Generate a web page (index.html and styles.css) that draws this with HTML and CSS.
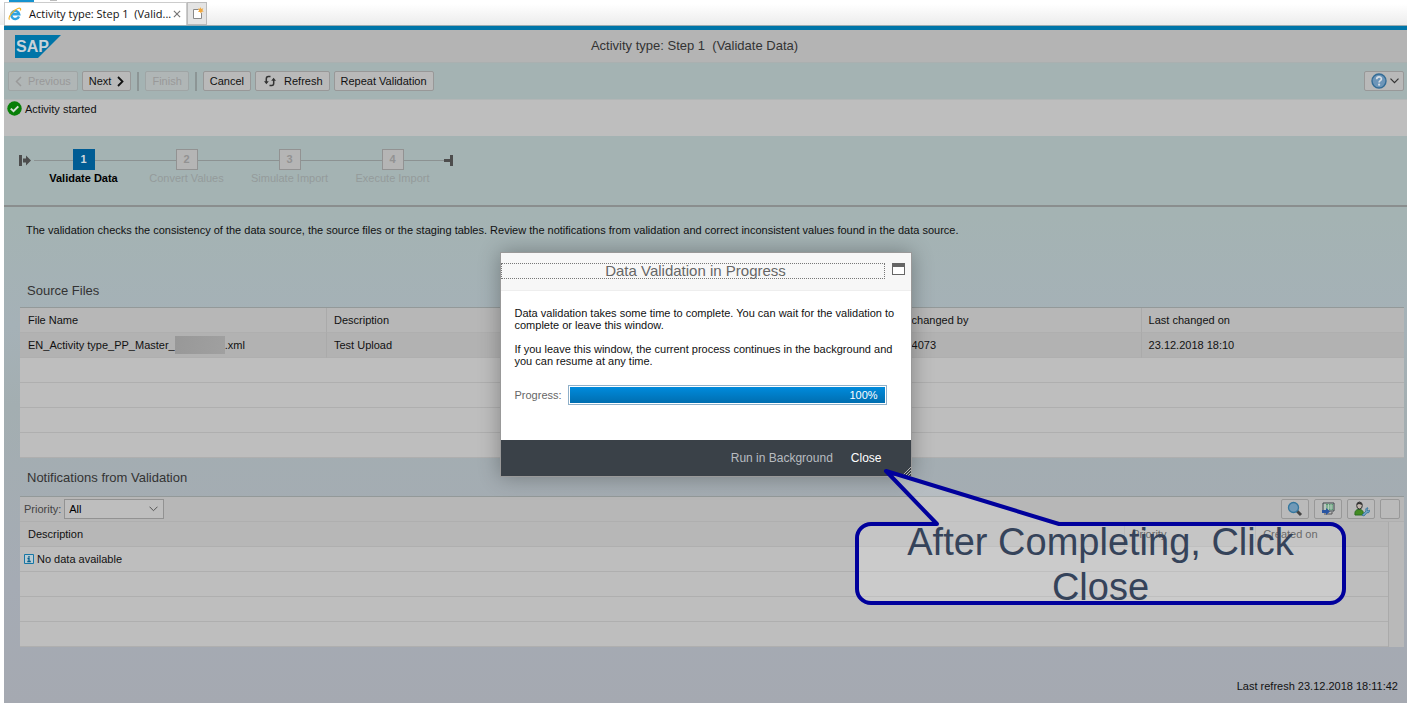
FILE: index.html
```html
<!DOCTYPE html>
<html lang="en">
<head>
<meta charset="utf-8">
<title>Activity type: Step 1 (Validate Data)</title>
<link rel="stylesheet" href="styles.css">
</head>
<body>
<div class="tabstrip">
  <div class="peek"><span class="peek-blue"></span><span class="peek-grey"></span></div>
  <div class="tab">
    <svg class="ie" width="14" height="14" viewBox="0 0 14 14" aria-hidden="true"><path d="M11 9.500A4 4 0 1 1 11.200 7.200H4" fill="none" stroke="#2fa3e0" stroke-width="2.400"/><path d="M1.500 12.600C-.4 10.400 5 3.200 9.800 1.500c2.500-.9 3.300.2 2.500 2" fill="none" stroke="#f2b52e" stroke-width="1.200"/></svg>
    <span class="tab-title">Activity type: Step 1&nbsp; (Valid...</span>
    <button class="tab-close" aria-label="Close tab"><svg width="8" height="8" viewBox="0 0 9 9"><path d="M1 1l7 7M8 1L1 8" stroke="#777" stroke-width="1.300"/></svg></button>
  </div>
  <button class="tab-new" aria-label="New tab"><svg width="13" height="13" viewBox="0 0 13 13"><path d="M7.500 2.500h-5v9h8V6" fill="#fff" stroke="#8a8a8a"/><path d="M9.500 0l.8 1.900 2-.6-.9 1.900 1.400 1.400-2 .2-.8 1.800-1-1.700-2 .1 1.100-1.600L7 1.500l2 .3z" fill="#f0a63a"/></svg></button>
</div>
<div class="app">
  <header class="masthead">
    <svg class="logo" width="46" height="23" viewBox="0 0 46 23" role="img" aria-label="SAP"><path d="M0 0h46L23 23H0z" fill="#0075a8"/><text class="logo-text" x="1" y="17">SAP</text></svg>
    <h1 class="title">Activity type: Step 1&nbsp; (Validate Data)</h1>
  </header>
  <div class="toolbar">
    <button class="btn" disabled><svg width="7" height="11" viewBox="0 0 7 11"><path d="M6 1L1.500 5.500 6 10" fill="none" stroke="currentColor" stroke-width="1.500"/></svg>Previous</button>
    <button class="btn">Next<svg width="7" height="11" viewBox="0 0 7 11"><path d="M1 1l4.500 4.500L1 10" fill="none" stroke="currentColor" stroke-width="1.800"/></svg></button>
    <span class="sep"></span>
    <button class="btn" disabled>Finish</button>
    <span class="sep"></span>
    <button class="btn">Cancel</button>
    <button class="btn btn-wide"><svg width="12" height="12" viewBox="0 0 12 12"><path d="M6.500 1.500H4.300Q2.300 1.500 2.300 3.800V7M5.500 10.500h2.200q2 0 2-2.300V5" fill="none" stroke="#333" stroke-width="1.500"/><path d="M0 6.200h4.800L2.400 9.200zM12 5.800H7.200L9.600 2.800z" fill="#333"/></svg>Refresh</button>
    <button class="btn">Repeat Validation</button>
    <button class="btn help" aria-label="Help"><svg width="16" height="16" viewBox="0 0 16 16"><circle cx="8" cy="8" r="7" fill="#6d95b8" stroke="#336c96" stroke-width="1.400"/><path d="M5.700 6.300c0-3.200 4.700-3 4.700-.4 0 1.700-2.300 1.700-2.300 3.500" fill="none" stroke="#d5dde5" stroke-width="1.700"/><circle cx="8.100" cy="11.700" r="1.100" fill="#d5dde5"/></svg><svg width="9" height="6" viewBox="0 0 9 6"><path d="M.5.7l4 4 4-4" fill="none" stroke="#333" stroke-width="1.200"/></svg></button>
  </div>
  <div class="message" role="status">
    <svg width="15" height="15" viewBox="0 0 15 15" aria-hidden="true"><circle cx="7.500" cy="7.500" r="7.200" fill="#087f08"/><path d="M3.800 7.600l2.700 2.600 4.800-4.800" fill="none" stroke="#d6ded6" stroke-width="2"/></svg>
    <span>Activity started</span>
  </div>
  <nav class="roadmap" aria-label="Steps">
    <svg width="13" height="11" viewBox="0 0 13 11"><path d="M0 0h3v11H0zM4 3.500h3V.5l5 5-5 5v-3H4z" fill="#4d4d4d"/></svg>
    <ol class="steps">
      <li class="step current"><span class="num">1</span><span>Validate Data</span></li>
      <li class="step"><span class="num">2</span><span>Convert Values</span></li>
      <li class="step"><span class="num">3</span><span>Simulate Import</span></li>
      <li class="step"><span class="num">4</span><span>Execute Import</span></li>
    </ol>
    <svg width="10" height="11" viewBox="0 0 10 11"><path d="M0 4h6V0h3v11H6V7H0z" fill="#4d4d4d"/></svg>
  </nav>
  <main class="content">
    <p class="intro">The validation checks the consistency of the data source, the source files or the staging tables. Review the notifications from validation and correct inconsistent values found in the data source.</p>
    <h2 class="heading">Source Files</h2>
    <table class="grid files">
      <colgroup><col class="c-file"><col class="c-desc"><col class="c-by"><col></colgroup>
      <thead><tr><th>File Name</th><th>Description</th><th class="user">changed by</th><th>Last changed on</th></tr></thead>
      <tbody>
        <tr class="selected"><td><span class="file">EN_Activity type_PP_Master_<span class="redacted"></span>.xml</span></td><td>Test Upload</td><td class="user">4073</td><td>23.12.2018 18:10</td></tr>
        <tr><td colspan="4"></td></tr>
        <tr><td colspan="4"></td></tr>
        <tr><td colspan="4"></td></tr>
        <tr><td colspan="4"></td></tr>
      </tbody>
    </table>
    <h2 class="heading second">Notifications from Validation</h2>
    <section class="panel">
      <div class="panel-bar">
        <label for="priority">Priority:</label>
        <span class="select-wrap"><select id="priority"><option>All</option></select><svg class="chev" width="9" height="6" viewBox="0 0 9 6"><path d="M.5.7l4 4 4-4" fill="none" stroke="#555"/></svg></span>
        <span class="tools">
          <button class="tool" aria-label="Details"><svg width="16" height="16" viewBox="0 0 16 16"><path d="M10 10l4 4" stroke="#444" stroke-width="3"/><circle cx="6.500" cy="6.500" r="5" fill="#7099b7" stroke="#35779e" stroke-width="1.300"/></svg></button>
          <button class="tool" aria-label="Export"><svg width="16" height="16" viewBox="0 0 16 16"><path d="M3 2h11v8H3z" fill="#b8c4bd" stroke="#3d454b"/><path d="M6 3h7v6H6z" fill="#559a70"/><path d="M6 5h7M6 7h7M8.500 3v6M11 3v6" stroke="#c3d3c7" stroke-width=".8"/><path d="M4 13h8v-2" fill="none" stroke="#555"/><path d="M2 9h4V7l4 3.500L6 14v-2H2z" fill="#2955a2"/></svg></button>
          <button class="tool" aria-label="Personalize"><svg width="17" height="16" viewBox="0 0 17 16"><path d="M2 14c-.5-4 1-5.500 4-5.500S11 10 10 14z" fill="#438b22" stroke="#286c20"/><ellipse cx="6.500" cy="4.500" rx="2.800" ry="3.500" fill="#c2b7ae" stroke="#333"/><path d="M3.700 4C3.800.3 9 .2 9.300 4L6 3z" fill="#333"/><path d="M9 14l4-4c-1-2 1-4 2-3l-1 2 1 1 1.500-.8c.5 2-1 3-2.500 2.500l-3 3.300z" fill="#72a4c4" stroke="#2e7098" stroke-width=".8"/></svg></button>
          <button class="tool tool-blank" aria-label="More"></button>
        </span>
      </div>
      <div class="panel-body">
        <table class="grid notes">
          <colgroup><col><col class="c-prio"><col class="c-created"></colgroup>
          <thead><tr><th>Description</th><th class="dim">Priority</th><th class="dim">Created on</th></tr></thead>
          <tbody>
            <tr><td colspan="3" class="empty"><span class="info-row"><svg width="10" height="10" viewBox="0 0 10 10"><path d="M.5.5h9v9h-9z" fill="#b9cbd3" stroke="#1676a5"/><path d="M5 2v1.500M3.500 4.500H5v3M3.300 7.500h3.500" fill="none" stroke="#075e89" stroke-width="1.300"/></svg>No data available</span></td></tr>
            <tr><td colspan="3"></td></tr>
            <tr><td colspan="3"></td></tr>
            <tr><td colspan="3"></td></tr>
          </tbody>
        </table>
        <div class="scroller"></div>
      </div>
    </section>
    <p class="refreshed">Last refresh 23.12.2018 18:11:42</p>
  </main>
  <div class="dialog" role="dialog" aria-labelledby="dialog-title">
    <div class="dialog-head">
      <h2 class="dialog-title" id="dialog-title" tabindex="-1">Data Validation in Progress</h2>
      <button class="maximize" aria-label="Maximize"></button>
    </div>
    <div class="dialog-body">
      <p>Data validation takes some time to complete. You can wait for the validation to complete or leave this window.</p>
      <p>If you leave this window, the current process continues in the background and you can resume at any time.</p>
      <div class="progress-row"><span id="progress-label">Progress:</span><div class="track" role="progressbar" aria-labelledby="progress-label" aria-valuenow="100"><div class="fill" style="width:100%">100%</div></div></div>
    </div>
    <div class="dialog-foot">
      <button class="link-btn muted">Run in Background</button>
      <button class="link-btn">Close</button>
      <svg class="grip" width="9" height="9" viewBox="0 0 9 9"><path d="M0 9l9-9M3 9l6-6M6 9l3-3" stroke="#b5b5b5"/></svg>
    </div>
  </div>
  <div class="callout">
    <svg class="callout-shape" width="491" height="137" viewBox="0 0 491 137"><path d="M16 56H82L31 3 204 56H475a14 14 0 0 1 14 14v51a14 14 0 0 1-14 14H16a14 14 0 0 1-14-14V70a14 14 0 0 1 14-14z" fill="#fff" fill-opacity=".2" stroke="#00009c" stroke-width="4" stroke-linejoin="round"/></svg>
    <p class="callout-text">After Completing, Click Close</p>
  </div>
</div>
</body>
</html>
```

FILE: styles.css
```css
* { box-sizing: border-box; }
body {
  margin: 0;
  min-height: 100vh;
  display: flex;
  flex-direction: column;
  position: relative;
  background: #fff;
  color: #111;
  font: 11px/14px "Liberation Sans", Arial, sans-serif;
}
h1, h2, p, ol { margin: 0; padding: 0; font-weight: normal; }
button, select { font: inherit; color: inherit; margin: 0; }
svg { flex: none; display: block; }

/* browser tabs */
.tabstrip {
  display: flex;
  height: 25px;
  padding: 2px 8px 0 4px;
  background: linear-gradient(#fff 4px, #ececec);
}
.peek { position: absolute; top: 0; left: 9px; display: flex; gap: 16px; }
.peek-blue { width: 25px; height: 2px; background: #1593cf; }
.peek-grey { width: 7px; height: 1px; background: #bbb; }
.tab {
  display: flex;
  align-items: center;
  width: 183px;
  padding: 0 5px 0 3px;
  background: #fff;
  border: 1px solid #ccc;
  border-bottom: 0;
  font-family: "Open Sans", sans-serif;
}
.tab-title { flex: 1; padding-left: 7px; white-space: nowrap; }
.tab-close, .tab-new { border: 0; padding: 0; background: none; }
.tab-new {
  display: flex;
  align-items: center;
  justify-content: center;
  width: 20px;
  background: #e4e4e4;
  border: 1px solid #bbb;
}

/* page frame */
.app {
  flex: 1;
  display: flex;
  flex-direction: column;
  margin-left: 4px;
  border-top: 1px solid #9aabb0;
  background: linear-gradient(#a4b3b3 190px, #a5b1b7 300px, #a3aeb1 380px, #a5abb4 560px, #a5a9b1);
}
.masthead {
  display: flex;
  align-items: center;
  height: 37px;
  padding: 0 11px;
  border-top: 4px solid #0075a8;
  border-bottom: 1px solid #aab0b0;
  background: #b4b4b4;
}
.logo-text { font: bold 16px "Liberation Sans", Arial, sans-serif; fill: #c8d2d8; }
.title { flex: 1; padding-right: 68px; text-align: center; font-size: 13px; color: #333; }

.toolbar {
  display: flex;
  align-items: center;
  gap: 4px;
  height: 36px;
  padding: 0 3px 0 4px;
}
.btn {
  display: flex;
  align-items: center;
  gap: 6px;
  height: 20px;
  padding: 0 6px;
  border: 1px solid #989898;
  border-radius: 2px;
  background: #b9b9b9;
  white-space: nowrap;
}
.btn-wide { gap: 8px; padding-left: 8px; }
.btn:disabled { color: #999; background: #b0b6b6; border-color: #9fa5a5; }
.sep { width: 2px; height: 19px; margin: 0 2px; background: #8c9595; }
.help { margin-left: auto; gap: 3px; padding: 0 4px 0 6px; }

.message {
  display: flex;
  gap: 3px;
  height: 37px;
  padding: 1px 3px;
  background: #bebebe;
  border-top: 1px solid #b2b6b6;
}
.message span { padding-top: 1px; }

/* roadmap */
.roadmap {
  display: flex;
  height: 71px;
  padding: 13px 15px 0;
  border-bottom: 2px solid #8a8e8e;
}
.roadmap > svg { margin-top: 6px; }
.steps {
  display: flex;
  list-style: none;
  background: linear-gradient(#8c9292, #8c9292) 2px 11px / 100% 1px no-repeat;
}
.step {
  display: flex;
  flex-direction: column;
  align-items: center;
  gap: 1px;
  width: 103px;
  color: #949b9b;
}
.num {
  width: 22px;
  height: 21px;
  border: 1px solid #929292;
  background: #b5b5b5;
  color: #929292;
  font-weight: bold;
  line-height: 18px;
  text-align: center;
}
.current { color: #000; font-weight: bold; }
.current .num { background: #005c94; border-color: #005c94; color: #d0d8dd; }

/* content */
.content { padding: 16px 3px 12px 16px; }
.intro { padding-left: 6px; }
.heading { padding: 46px 7px 8px; font-size: 13px; line-height: 16px; color: #333; }
.heading.second { padding: 12px 7px 10px; }
.grid {
  width: 100%;
  border-collapse: separate;
  border-spacing: 0;
  table-layout: fixed;
  background: #bebebe;
}
.grid th, .grid td {
  height: 25px;
  padding: 0 8px;
  border-bottom: 1px solid #afafaf;
  font-weight: normal;
  text-align: left;
}
.grid th { background: #b7b7b7; }
.grid th + th, .selected td + td { border-left: 1px solid #aaa; padding-left: 7px; }
.grid .dim { color: #444; }
.selected td { background: #b2b2b2; }
.files { border-top: 1px solid #939999; }
.c-file { width: 306px; }
.c-desc { width: 40%; }
.c-by { width: 261px; }
.file { display: flex; align-items: center; }
.redacted { width: 50px; height: 18px; background: linear-gradient(100deg, #989898, #a0a0a0); }
.files .user.user { padding-left: 31px; }

.panel { border-top: 1px solid #939999; background: #b7b7b7; }
.panel-bar {
  display: flex;
  align-items: center;
  height: 25px;
  padding: 0 4px;
  border-bottom: 1px solid #afafaf;
  color: #444;
}
.select-wrap { position: relative; margin-left: 3px; }
.select-wrap select {
  display: block;
  appearance: none;
  width: 100px;
  height: 20px;
  padding: 0 4px;
  border: 1px solid #929292;
  border-radius: 0;
  background: #bebebe;
  color: #000;
}
.chev { position: absolute; right: 6px; top: 7px; pointer-events: none; }
.tools { display: flex; gap: 5px; margin-left: auto; }
.tool {
  display: flex;
  align-items: center;
  justify-content: center;
  width: 28px;
  height: 20px;
  padding: 0;
  border: 1px solid #989898;
  border-radius: 2px;
  background: #bababa;
}
.tool-blank { width: 20px; }
.panel-body { display: flex; }
.scroller { width: 16px; border-left: 1px solid #aaa; background: #b9b9b9; }
.c-prio { width: 131px; }
.c-created { width: 133px; }
.grid .empty { padding-left: 4px; }
.info-row { display: flex; align-items: center; gap: 3px; }
.refreshed { padding: 32px 6px 0; text-align: right; }

/* dialog */
.dialog {
  position: absolute;
  top: 252px;
  left: 50%;
  width: 412px;
  margin-left: -204px;
  border: 1px solid #999;
  background: #fff;
  box-shadow: 0 0 20px rgba(0, 0, 0, 0.3);
}
.dialog-head {
  display: flex;
  align-items: flex-start;
  justify-content: space-between;
  height: 38px;
  padding: 10px 6px 0 0;
  background: #f7f7f7;
  border-bottom: 1px solid #eee;
}
.dialog-title {
  width: 384px;
  border: 1px dotted #777;
  padding-left: 6px;
  color: #666;
  font-size: 15px;
  line-height: 14px;
  text-align: center;
}
.maximize { width: 13px; height: 12px; padding: 0; border: 1px solid #666; border-top-width: 4px; background: #fff; }
.dialog-body { height: 149px; padding: 16px 14px; line-height: 12px; }
.dialog-body p { margin-bottom: 12px; }
.progress-row { display: flex; align-items: center; gap: 6px; padding-top: 6px; color: #666; }
.track { flex: 1; max-width: 319px; height: 20px; padding: 1px; border: 1px solid #8fb0c9; }
.fill {
  height: 16px;
  padding-right: 7px;
  background: linear-gradient(#008bdc, #006eb0);
  color: #fff;
  line-height: 16px;
  text-align: right;
}
.dialog-foot {
  position: relative;
  display: flex;
  align-items: center;
  justify-content: flex-end;
  gap: 18px;
  height: 36px;
  padding-right: 29px;
  background: #3a4148;
}
.link-btn { border: 0; padding: 0; background: none; color: #fff; font-size: 12px; }
.muted { color: #b8bcc0; }
.grip { position: absolute; right: 0; bottom: 0; }

/* annotation */
.callout { position: absolute; top: 468px; right: 61px; width: 491px; height: 137px; padding: 52px 50px 0; }
.callout-shape { position: absolute; inset: 0; }
.callout-text { position: relative; color: #35435a; font-size: 38px; line-height: 45px; text-align: center; }
```
